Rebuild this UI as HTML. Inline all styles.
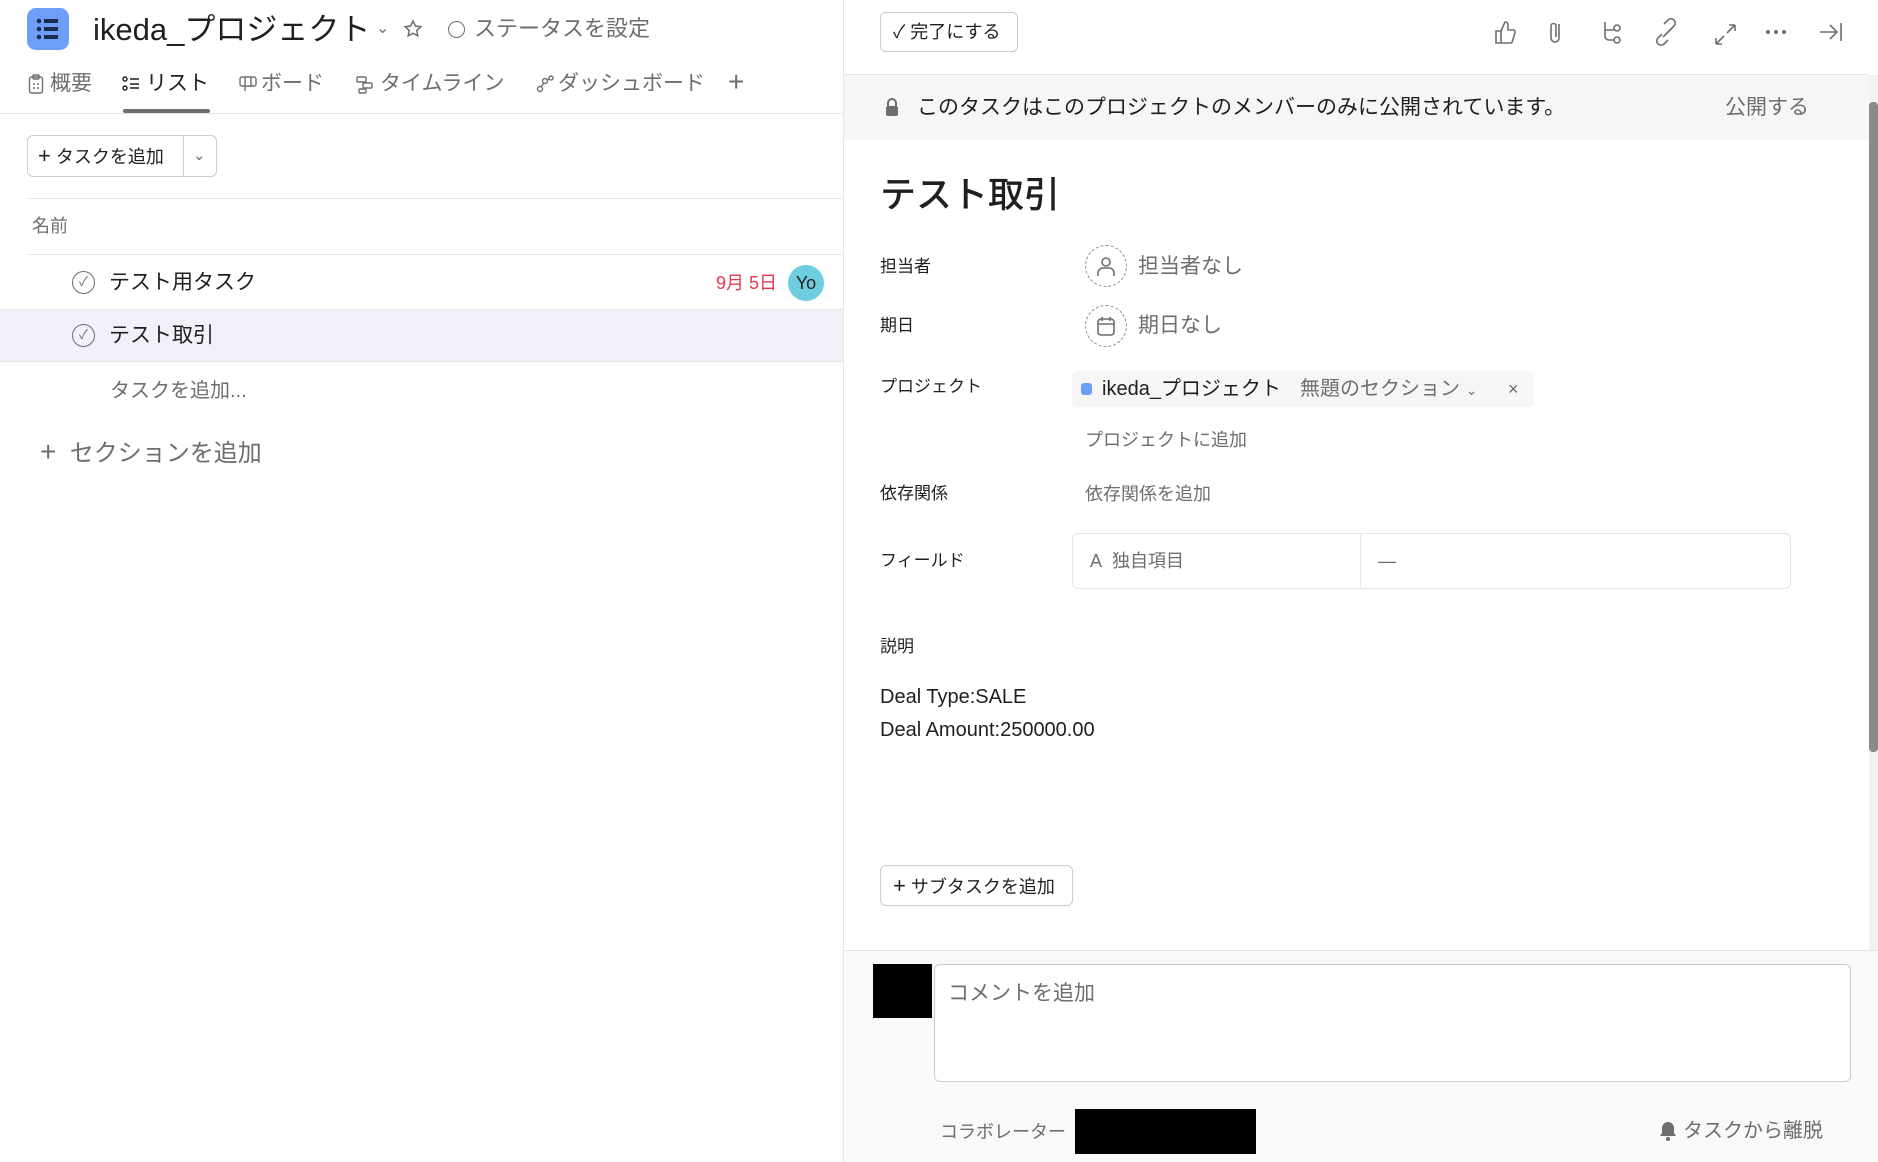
<!DOCTYPE html>
<html><head><meta charset="utf-8"><style>
*{margin:0;padding:0;box-sizing:border-box}
body{width:1878px;height:1162px;position:relative;overflow:hidden;background:#fff;font-family:"Liberation Sans","Noto Sans CJK JP",sans-serif;color:#1e1f21}
.a{position:absolute;white-space:nowrap}
.g{color:#6d6e6f}
svg{display:block}
</style></head><body>
<!-- left panel -->
<div class="a" style="left:27px;top:8px;width:42px;height:42px;background:#6d9ef8;border-radius:9px">
<svg width="42" height="42"><g fill="#1d2b4c"><circle cx="12" cy="13" r="2.3"/><circle cx="12" cy="21" r="2.3"/><circle cx="12" cy="29" r="2.3"/><rect x="17" y="11" width="14" height="4"/><rect x="17" y="19" width="14" height="4"/><rect x="17" y="27" width="14" height="4"/></g></svg></div>
<div class="a" style="left:93px;top:10px;font-size:31px;line-height:40px">ikeda_プロジェクト</div>
<div class="a g" style="left:376px;top:18px;font-size:16px">⌄</div>
<svg class="a" style="left:403px;top:19px" width="20" height="20"><path d="M10 2l2.4 5 5.4.7-4 3.7 1 5.4L10 14.2 5.2 16.8l1-5.4-4-3.7 5.4-.7z" fill="none" stroke="#6d6e6f" stroke-width="1.5"/></svg>
<div class="a" style="left:448px;top:21px;width:17px;height:17px;border:1.6px solid #6d6e6f;border-radius:50%"></div>
<div class="a g" style="left:474px;top:14px;font-size:22px;line-height:30px">ステータスを設定</div>
<svg class="a" style="left:28px;top:74px" width="16" height="20" fill="none" stroke="#6d6e6f" stroke-width="1.4"><rect x="1.5" y="3" width="13" height="16" rx="2"/><rect x="5" y="1" width="6" height="4" rx="1"/><path d="M5 10h2M9 10h2M5 14h2M9 14h2"/></svg>
<div class="a g" style="left:50px;top:70px;font-size:21px;line-height:28px">概要</div>
<svg class="a" style="left:122px;top:76px" width="18" height="16" fill="none" stroke="#1e1f21" stroke-width="1.4"><circle cx="3" cy="3" r="2"/><circle cx="3" cy="12" r="2"/><path d="M8 3h9M8 8h9M8 12h9"/></svg>
<div class="a" style="left:146px;top:70px;font-size:21px;line-height:28px">リスト</div>
<div class="a" style="left:123px;top:109px;width:87px;height:4px;background:#6d6e6f;border-radius:2px"></div>
<svg class="a" style="left:239px;top:76px" width="18" height="16" fill="none" stroke="#6d6e6f" stroke-width="1.4"><rect x="1" y="1" width="16" height="9" rx="2"/><path d="M6 1v14M12 1v10"/></svg>
<div class="a g" style="left:261px;top:70px;font-size:21px;line-height:28px">ボード</div>
<svg class="a" style="left:356px;top:76px" width="18" height="18" fill="none" stroke="#6d6e6f" stroke-width="1.4"><rect x="1" y="1" width="9" height="5" rx="1"/><rect x="7" y="7" width="9" height="5" rx="1"/><rect x="3" y="13" width="7" height="4" rx="1"/></svg>
<div class="a g" style="left:380px;top:70px;font-size:21px;line-height:28px">タイムライン</div>
<svg class="a" style="left:536px;top:75px" width="18" height="18" fill="none" stroke="#6d6e6f" stroke-width="1.4"><circle cx="4" cy="14" r="2.5"/><circle cx="9" cy="6" r="2.5"/><circle cx="15" cy="3" r="2"/><path d="M5 12l3-4M11 5l2-1"/></svg>
<div class="a g" style="left:558px;top:70px;font-size:21px;line-height:28px">ダッシュボード</div>
<div class="a g" style="left:728px;top:66px;font-size:28px;line-height:32px">+</div>
<div class="a" style="left:0;top:113px;width:843px;height:1px;background:#e6e6e6"></div>
<div class="a" style="left:27px;top:135px;width:190px;height:42px;border:1px solid #cfcbcb;border-radius:6px"></div>
<div class="a" style="left:183px;top:135px;width:1px;height:42px;background:#cfcbcb"></div>
<div class="a" style="left:38px;top:143px;font-size:18px;line-height:26px"><b style="font-size:22px;font-weight:400">+</b> タスクを追加</div>
<div class="a g" style="left:193px;top:146px;font-size:15px">⌄</div>
<div class="a" style="left:27px;top:198px;width:816px;height:1px;background:#e6e6e6"></div>
<div class="a g" style="left:32px;top:214px;font-size:18px;line-height:24px">名前</div>
<div class="a" style="left:27px;top:254px;width:816px;height:1px;background:#e6e6e6"></div>
<div class="a" style="left:72px;top:271px;width:23px;height:23px;border:1.5px solid #6d6e6f;border-radius:50%;font-size:13px;line-height:20px;text-align:center;color:#6d6e6f">✓</div>
<div class="a" style="left:109px;top:268px;font-size:21px;line-height:30px">テスト用タスク</div>
<div class="a" style="left:716px;top:271px;font-size:18px;line-height:24px;color:#e8384f">9月 5日</div>
<div class="a" style="left:788px;top:265px;width:36px;height:36px;border-radius:50%;background:#6fcde0;font-size:18px;line-height:36px;text-align:center;color:#1e1f21">Yo</div>
<div class="a" style="left:0;top:309px;width:843px;height:53px;background:#f0f1f9;border-top:1px solid #e6e6e6;border-bottom:1px solid #e6e6e6"></div>
<div class="a" style="left:72px;top:324px;width:23px;height:23px;border:1.5px solid #6d6e6f;border-radius:50%;font-size:13px;line-height:20px;text-align:center;color:#6d6e6f">✓</div>
<div class="a" style="left:109px;top:321px;font-size:21px;line-height:30px">テスト取引</div>
<div class="a g" style="left:110px;top:377px;font-size:20px;line-height:28px">タスクを追加...</div>
<div class="a g" style="left:40px;top:436px;font-size:24px;line-height:32px"><span style="font-size:28px">+</span>&nbsp; セクションを追加</div>
<div class="a" style="left:843px;top:0;width:1px;height:1162px;background:#e6e6e6"></div>
<!-- right panel -->
<div class="a" style="left:880px;top:12px;width:138px;height:40px;border:1px solid #cfcbcb;border-radius:6px;font-size:18px;line-height:38px;padding-left:12px">✓ 完了にする</div>
<svg class="a" style="left:1490px;top:18px" width="360" height="30" fill="none" stroke="#6d6e6f" stroke-width="1.6">
<path d="M6 13h5v12H6zM11 13l4-9c2 0 3 1 3 3v5h5c1.5 0 2.5 1.2 2 2.6l-2.5 8.5c-.3 1-1 1.9-2 1.9H11"/>
<path d="M69 6v14a4 4 0 0 1-8 0V8a2.5 2.5 0 0 1 5 0v11"/>
<path d="M115 4v14a4 4 0 0 0 4 4h5M115 12h9"/><circle cx="127" cy="10" r="3"/><circle cx="127" cy="22" r="3"/>
<path d="M172 16l-4 4a4 4 0 0 0 6 6l4-4M180 12l4-4a4 4 0 0 0-6-6l-4 4M173 19l8-8"/>
<path d="M226 26l8-8M226 26v-6M226 26h6M245 7l-8 8M245 7h-6M245 7v6"/>
<g fill="#6d6e6f" stroke="none"><circle cx="278" cy="14" r="2"/><circle cx="286" cy="14" r="2"/><circle cx="294" cy="14" r="2"/></g>
<path d="M330 14h17M340 7l7 7-7 7M351 5v18"/>
</svg>
<div class="a" style="left:843px;top:74px;width:1026px;height:1px;background:#e6e6e6"></div>
<div class="a" style="left:844px;top:75px;width:1025px;height:65px;background:#f6f6f7"></div>
<svg class="a" style="left:884px;top:97px" width="16" height="20"><path d="M4 9V6a4 4 0 0 1 8 0v3" fill="none" stroke="#6d6e6f" stroke-width="2"/><rect x="2" y="9" width="12" height="10" rx="2" fill="#6d6e6f"/></svg>
<div class="a" style="left:917px;top:94px;font-size:21px;line-height:28px">このタスクはこのプロジェクトのメンバーのみに公開されています。</div>
<div class="a g" style="left:1725px;top:94px;font-size:21px;line-height:28px">公開する</div>
<div class="a" style="left:1869px;top:75px;width:9px;height:875px;background:#f2f2f2"></div>
<div class="a" style="left:1869px;top:102px;width:9px;height:650px;background:#8a8a8a;border-radius:4px"></div>
<div class="a" style="left:880px;top:172px;font-size:36px;line-height:46px;font-weight:500">テスト取引</div>
<div class="a" style="left:880px;top:255px;font-size:17px;line-height:24px">担当者</div>
<div class="a" style="left:880px;top:314px;font-size:17px;line-height:24px">期日</div>
<div class="a" style="left:880px;top:375px;font-size:17px;line-height:24px">プロジェクト</div>
<div class="a" style="left:880px;top:482px;font-size:17px;line-height:24px">依存関係</div>
<div class="a" style="left:880px;top:549px;font-size:17px;line-height:24px">フィールド</div>
<div class="a" style="left:880px;top:635px;font-size:17px;line-height:24px">説明</div>
<div class="a" style="left:1085px;top:245px;width:42px;height:42px;border:1.3px dashed #8a8a8a;border-radius:50%"></div>
<svg class="a" style="left:1094px;top:254px" width="24" height="24" fill="none" stroke="#6d6e6f" stroke-width="1.6"><circle cx="12" cy="8" r="4"/><path d="M4 22v-3a5 5 0 0 1 5-5h6a5 5 0 0 1 5 5v3"/></svg>
<div class="a g" style="left:1138px;top:252px;font-size:21px;line-height:30px">担当者なし</div>
<div class="a" style="left:1085px;top:305px;width:42px;height:42px;border:1.3px dashed #8a8a8a;border-radius:50%"></div>
<svg class="a" style="left:1094px;top:314px" width="24" height="24" fill="none" stroke="#6d6e6f" stroke-width="1.6"><rect x="4" y="5" width="16" height="16" rx="3"/><path d="M4 10h16M8 3v4M16 3v4"/></svg>
<div class="a g" style="left:1138px;top:311px;font-size:21px;line-height:30px">期日なし</div>
<div class="a" style="left:1072px;top:371px;width:462px;height:36px;background:#f6f6f6;border-radius:5px"></div>
<div class="a" style="left:1081px;top:383px;width:11px;height:12px;background:#6d9ef8;border-radius:3px"></div>
<div class="a" style="left:1102px;top:375px;font-size:20px;line-height:28px">ikeda_プロジェクト</div>
<div class="a g" style="left:1300px;top:375px;font-size:20px;line-height:28px">無題のセクション <span style="font-size:14px">⌄</span></div>
<div class="a g" style="left:1508px;top:377px;font-size:18px;line-height:24px">×</div>
<div class="a g" style="left:1085px;top:428px;font-size:18px;line-height:24px">プロジェクトに追加</div>
<div class="a g" style="left:1085px;top:482px;font-size:18px;line-height:24px">依存関係を追加</div>
<div class="a" style="left:1072px;top:533px;width:719px;height:56px;border:1px solid #e6e6e6;border-radius:6px"></div>
<div class="a" style="left:1360px;top:533px;width:1px;height:56px;background:#e6e6e6"></div>
<div class="a g" style="left:1090px;top:549px;font-size:18px;line-height:24px">A&nbsp; 独自項目</div>
<div class="a g" style="left:1378px;top:549px;font-size:18px;line-height:24px">—</div>
<div class="a" style="left:880px;top:683px;font-size:20px;line-height:28px">Deal Type:SALE</div>
<div class="a" style="left:880px;top:716px;font-size:20px;line-height:28px">Deal Amount:250000.00</div>
<div class="a" style="left:880px;top:865px;width:193px;height:41px;border:1px solid #cfcbcb;border-radius:6px;font-size:18px;line-height:39px;padding-left:12px"><span style="font-size:22px">+</span> サブタスクを追加</div>
<div class="a" style="left:844px;top:950px;width:1034px;height:212px;background:#f9f9f9;border-top:1px solid #e6e6e6"></div>
<div class="a" style="left:873px;top:964px;width:59px;height:54px;background:#000"></div>
<div class="a" style="left:934px;top:964px;width:917px;height:118px;background:#fff;border:1px solid #cfcbcb;border-radius:6px"></div>
<div class="a g" style="left:948px;top:980px;font-size:21px;line-height:28px">コメントを追加</div>
<div class="a g" style="left:940px;top:1120px;font-size:18px;line-height:24px">コラボレーター</div>
<div class="a" style="left:1075px;top:1109px;width:181px;height:45px;background:#000"></div>
<svg class="a" style="left:1659px;top:1121px" width="18" height="20"><path d="M9 1a6 6 0 0 0-6 6v5l-2 3h16l-2-3V7a6 6 0 0 0-6-6z" fill="#6d6e6f"/><circle cx="9" cy="18" r="2" fill="#6d6e6f"/></svg>
<div class="a g" style="left:1683px;top:1117px;font-size:20px;line-height:28px">タスクから離脱</div>
</body></html>
